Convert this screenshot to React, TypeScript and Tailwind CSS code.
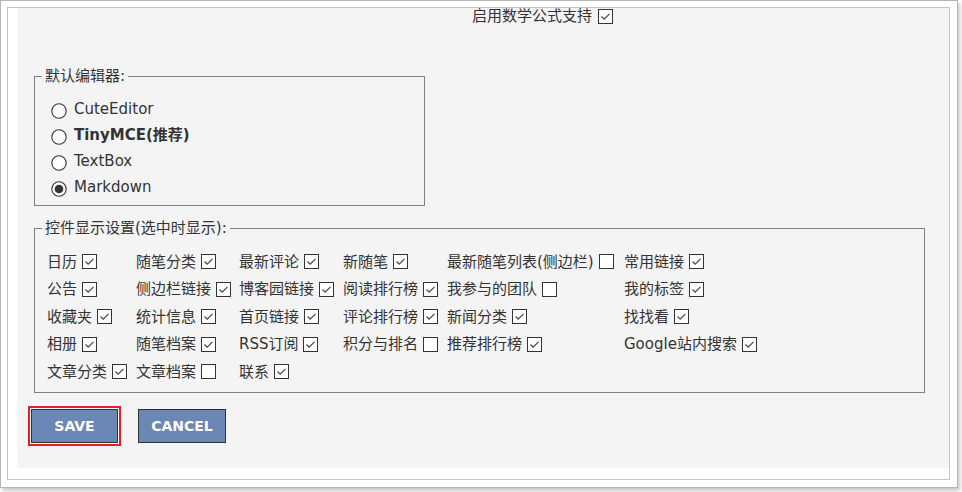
import React from 'react';

type Option = { label: string; checked: boolean };

const editors = [
  { label: 'CuteEditor', bold: false, checked: false },
  { label: 'TinyMCE(推荐)', bold: true, checked: false },
  { label: 'TextBox', bold: false, checked: false },
  { label: 'Markdown', bold: false, checked: true },
];

const widgets: Option[][] = [
  [
    { label: '日历', checked: true },
    { label: '随笔分类', checked: true },
    { label: '最新评论', checked: true },
    { label: '新随笔', checked: true },
    { label: '最新随笔列表(侧边栏)', checked: false },
    { label: '常用链接', checked: true },
  ],
  [
    { label: '公告', checked: true },
    { label: '侧边栏链接', checked: true },
    { label: '博客园链接', checked: true },
    { label: '阅读排行榜', checked: true },
    { label: '我参与的团队', checked: false },
    { label: '我的标签', checked: true },
  ],
  [
    { label: '收藏夹', checked: true },
    { label: '统计信息', checked: true },
    { label: '首页链接', checked: true },
    { label: '评论排行榜', checked: true },
    { label: '新闻分类', checked: true },
    { label: '找找看', checked: true },
  ],
  [
    { label: '相册', checked: true },
    { label: '随笔档案', checked: true },
    { label: 'RSS订阅', checked: true },
    { label: '积分与排名', checked: false },
    { label: '推荐排行榜', checked: true },
    { label: 'Google站内搜索', checked: true },
  ],
  [
    { label: '文章分类', checked: true },
    { label: '文章档案', checked: false },
    { label: '联系', checked: true },
  ],
];

function CheckBox({ checked }: { checked: boolean }) {
  return (
    <svg width="15" height="15" viewBox="0 0 15 15" className="shrink-0">
      <rect x="0.5" y="0.5" width="14" height="14" fill="#fff" stroke="#333" />
      {checked && (
        <path d="M3.5 7.5 L6.2 10.2 L11.5 4.8" fill="none" stroke="#444" strokeWidth="1.2" />
      )}
    </svg>
  );
}

function Radio({ checked }: { checked: boolean }) {
  return (
    <svg width="16" height="16" viewBox="0 0 16 16" className="shrink-0">
      <circle cx="8" cy="8" r="7.2" fill="#fff" stroke="#333" strokeWidth="1.1" />
      {checked && <circle cx="8" cy="8" r="4.3" fill="#333" />}
    </svg>
  );
}

export default function App() {
  return (
    <div
      className="w-[962px] h-[492px] bg-white text-[15px] text-[#333] overflow-hidden"
      style={{ fontFamily: '"DejaVu Sans", "Noto Sans CJK SC", sans-serif' }}
    >
      <div className="w-[958px] h-[488px] border border-[#b4b4b4] bg-white p-[6px] shadow-[2px_3px_4px_rgba(0,0,0,0.22)]">
        <div className="w-[943px] h-[473px] border border-[#c4c4c4] pl-[9px] pb-[11px]">
          <div className="h-full bg-[#f4f4f4]">
            {/* math formula option */}
            <div className="h-[17px] flex items-center ml-[455px]">
              <span className="leading-[17px]">启用数学公式支持</span>
              <span className="ml-[6px]">
                <CheckBox checked />
              </span>
            </div>

            {/* default editor */}
            <fieldset className="ml-[17px] mt-[42px] w-[391px] border border-[#808080]">
              <legend className="ml-[7px] px-[3px] leading-[18px]">默认编辑器:</legend>
              <div className="pt-[11px] pb-[5px] pl-[16px]">
                {editors.map((e) => (
                  <div key={e.label} className="h-[26px] flex items-center">
                    <span className="mt-[3px]">
                      <Radio checked={e.checked} />
                    </span>
                    <span className={'ml-[7px] ' + (e.bold ? 'font-bold' : '')}>{e.label}</span>
                  </div>
                ))}
              </div>
            </fieldset>

            {/* widget settings */}
            <fieldset className="ml-[17px] mt-[13px] w-[891px] border border-[#808080]">
              <legend className="ml-[7px] px-[3px] leading-[18px]">控件显示设置(选中时显示):</legend>
              <div className="grid grid-cols-[89px_103px_104px_104px_177px_auto] auto-rows-[27.5px] pt-[11px] pb-[6.5px] pl-[12px]">
                {widgets.flat().map((w) => (
                  <div key={w.label} className="flex items-center whitespace-nowrap">
                    <span>{w.label}</span>
                    <span className="ml-[5px]">
                      <CheckBox checked={w.checked} />
                    </span>
                  </div>
                ))}
              </div>
            </fieldset>

            {/* actions */}
            <div className="flex items-center ml-[11px] mt-[13px]">
              <div className="border-2 border-[#e3202a] bg-white p-px">
                <button className="w-[87px] h-[34px] bg-[#6a87b5] border border-[#333] text-white font-bold text-[14px]">
                  SAVE
                </button>
              </div>
              <button className="ml-[17px] w-[88px] h-[34px] bg-[#6a87b5] border border-[#333] text-white font-bold text-[14px]">
                CANCEL
              </button>
            </div>
          </div>
        </div>
      </div>
    </div>
  );
}
